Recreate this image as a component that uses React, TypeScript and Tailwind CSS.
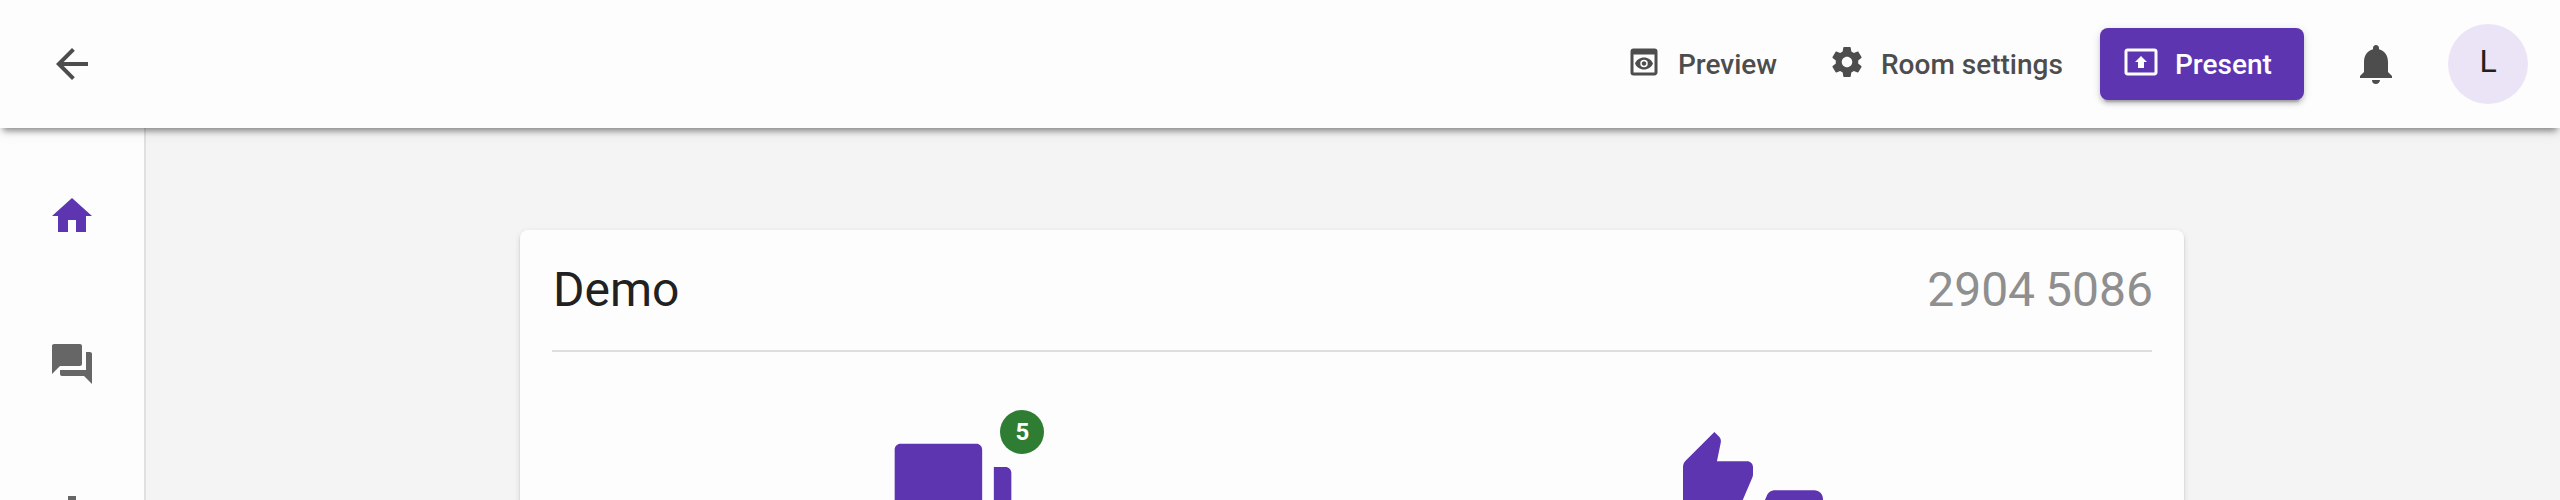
import React from "react";
import {
  MdArrowBack,
  MdEqualizer,
  MdHome,
  MdNotifications,
  MdPresentToAll,
  MdPreview,
  MdQuestionAnswer,
  MdThumbsUpDown,
} from "react-icons/md";

function SettingsIcon({ className }: { className?: string }) {
  return (
    <svg viewBox="0 0 24 24" fill="currentColor" className={className} aria-hidden="true">
      <path d="M19.43 12.98c.04-.32.07-.64.07-.98s-.03-.66-.07-.98l2.11-1.65c.19-.15.24-.42.12-.64l-2-3.46c-.12-.22-.39-.3-.61-.22l-2.49 1c-.52-.4-1.08-.73-1.69-.98l-.38-2.65C14.46 2.18 14.25 2 14 2h-4c-.25 0-.46.18-.49.42l-.38 2.65c-.61.25-1.17.59-1.69.98l-2.49-1c-.23-.09-.49 0-.61.22l-2 3.46c-.13.22-.07.49.12.64l2.11 1.65c-.04.32-.07.65-.07.98s.03.66.07.98l-2.11 1.65c-.19.15-.24.42-.12.64l2 3.46c.12.22.39.3.61.22l2.49-1c.52.4 1.08.73 1.69.98l.38 2.65c.03.24.24.42.49.42h4c.25 0 .46-.18.49-.42l.38-2.65c.61-.25 1.17-.59 1.69-.98l2.49 1c.23.09.49 0 .61-.22l2-3.46c.12-.22.07-.49-.12-.64l-2.11-1.65zM12 15.5c-1.93 0-3.5-1.57-3.5-3.5s1.57-3.5 3.5-3.5 3.5 1.57 3.5 3.5-1.57 3.5-3.5 3.5z" />
    </svg>
  );
}

function Header() {
  return (
    <header className="relative z-10 flex h-32 shrink-0 items-center bg-[#fdfdfd] pl-12 pr-8 text-[#4d4d4d] shadow-[0_6px_6px_-3px_rgba(0,0,0,0.4),0_2px_16px_0_rgba(0,0,0,0.1)]">
      <button aria-label="Back">
        <MdArrowBack className="size-12" />
      </button>
      <div className="ml-auto flex items-center text-[28px] font-medium">
        <button className="flex items-center">
          <MdPreview className="-mt-1 mr-4 size-9" />
          <span className="w-[98px] whitespace-nowrap pt-0.5 text-left">Preview</span>
        </button>
        <button className="ml-[53px] flex items-center">
          <SettingsIcon className="-mt-1 mr-4 size-9" />
          <span className="w-[184px] whitespace-nowrap pt-0.5 text-left">Room settings</span>
        </button>
        <button className="ml-[35px] flex h-[72px] w-[204px] items-center rounded-lg bg-[#5e35b1] pl-[23px] text-white shadow-[0_6px_2px_-4px_rgba(0,0,0,0.2),0_4px_4px_0_rgba(0,0,0,0.14),0_2px_10px_0_rgba(0,0,0,0.12)]">
          <MdPresentToAll className="-mt-1 mr-4 size-9" />
          <span className="pt-0.5">Present</span>
        </button>
        <button aria-label="Notifications" className="ml-12">
          <MdNotifications className="size-12" />
        </button>
        <button className="ml-12 flex size-20 items-center justify-center rounded-full bg-[#ebe4f7] pb-1.5 text-[32px] font-normal text-[#212121]">
          L
        </button>
      </div>
    </header>
  );
}

function Sidebar() {
  return (
    <nav className="flex w-[146px] shrink-0 flex-col items-center gap-[100px] border-r-2 border-[#e0e0e0] bg-[#fdfdfd] pt-16 text-[#666666]">
      <MdHome className="size-12 shrink-0 text-[#5e35b1]" />
      <MdQuestionAnswer className="size-12 shrink-0" />
      <MdEqualizer className="size-12 shrink-0" />
    </nav>
  );
}

export default function App() {
  return (
    <div className="flex h-[500px] w-[2560px] flex-col overflow-hidden bg-[#f4f4f4] font-['Roboto',sans-serif]">
      <Header />
      <div className="flex min-h-0 flex-1">
        <Sidebar />
        <main className="flex-1 pl-[374px] pt-[102px]">
          <section className="h-[600px] w-[1664px] rounded-lg bg-[#fdfdfd] px-8 shadow-[0_4px_2px_-2px_rgba(0,0,0,0.2),0_2px_2px_0_rgba(0,0,0,0.14),0_2px_6px_0_rgba(0,0,0,0.12)]">
            <div className="flex h-[122px] items-center justify-between border-b-2 border-[#dedede] text-[48px]">
              <h1 className="pl-px text-[#212121]">Demo</h1>
              <span className="-mr-px flex gap-[10px] text-[#8f8f8f]">
                <span>2904</span>
                <span>5086</span>
              </span>
            </div>
            <div className="-mr-px grid grid-cols-2 justify-items-center pl-px pt-20 text-[#5e35b1]">
              <div className="relative">
                <MdQuestionAnswer className="size-[140px]" />
                <span className="absolute -top-[22px] left-[117px] flex size-11 items-center justify-center rounded-full bg-[#2e7d32] pl-px text-2xl font-bold text-white">
                  5
                </span>
              </div>
              <MdThumbsUpDown className="size-[140px]" />
            </div>
          </section>
        </main>
      </div>
    </div>
  );
}
